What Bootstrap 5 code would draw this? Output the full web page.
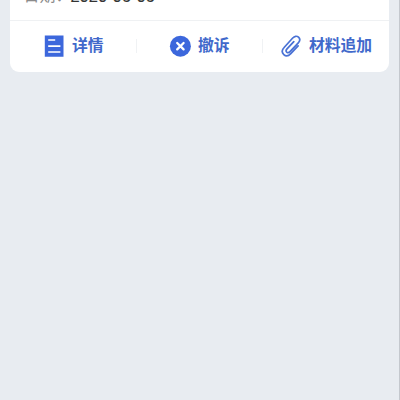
<!DOCTYPE html>
<html lang="zh-CN">
<head>
<meta charset="utf-8">
<meta name="viewport" content="width=device-width, initial-scale=1">
<title>详情</title>
<link href="https://cdn.jsdelivr.net/npm/bootstrap@5.3.0/dist/css/bootstrap.min.css" rel="stylesheet">
<style>
body{height:400px;background:#e8ecf1;border-right:1px solid #c4c8ce;font-family:"Liberation Sans","Noto Sans CJK SC",sans-serif}
.record{margin:0 9.6px 0 10.4px;height:71.5px;border-radius:0 0 9px 9px}
.date-row{height:21px;padding-left:13px;border-bottom:1px solid #eff1f3;font-size:16px;line-height:24px}
.date-row>div{margin-top:-16px}
.date-label{width:47px;color:#8b8b8b}
.date-value{color:#333;font-size:16.5px;-webkit-text-stroke:.2px #333}
.actions{height:50px}
.action{color:#4169cb;font-size:15.8px;font-weight:700;line-height:24px;height:50px}
.action svg{flex:none}
.action span{margin-left:6.5px}
.first{width:125.6px;padding-left:34px}
.second{width:125.4px;padding-left:32.5px}
.third{padding-left:17px}
.divider{width:1px;height:14px;background:#f0f2f4}
</style>
<script src="https://cdn.jsdelivr.net/npm/bootstrap@5.3.0/dist/js/bootstrap.bundle.min.js"></script>
</head>
<body class="overflow-hidden">
<main class="record bg-white overflow-hidden">
  <div class="date-row overflow-hidden"><div class="d-flex"><span class="date-label text-nowrap">日期：</span><span class="date-value">2020-06-06</span></div></div>
  <div class="actions d-flex align-items-center text-nowrap">
    <a class="action first d-flex align-items-center text-decoration-none" href="#">
      <svg width="21" height="22" viewBox="0 0 21 22"><path fill="#3c67dc" d="M.8.6h18.7v21.2H.8z"/><path stroke="#fff" stroke-width="1.7" d="M4.2 5h7M4.2 11.1h12.2M4.2 17h12.2"/></svg><span>详情</span>
    </a>
    <span class="divider"></span>
    <a class="action second d-flex align-items-center text-decoration-none" href="#">
      <svg width="22" height="22" viewBox="0 0 22 22"><circle cx="11.4" cy="11.2" r="10.5" fill="#3c67dc"/><path stroke="#fff" stroke-width="2.3" stroke-linecap="round" d="m8.2 8 6.4 6.4m0-6.4-6.4 6.4"/></svg><span>撤诉</span>
    </a>
    <span class="divider"></span>
    <a class="action third d-flex align-items-center text-decoration-none" href="#">
      <svg width="22" height="22" viewBox="0 0 22 22" fill="none" stroke="#4a72d5" stroke-width="1.7" stroke-linecap="round" stroke-linejoin="round"><path d="m18.1 10.9-7.3 7.8c-2.1 2.2-4.9 2.9-7 .9-2.2-2.1-1.8-4.9.3-7.1l8.6-9.5c1.7-1.9 4.1-2.4 5.8-.8s1.4 3.9-.2 5.6l-8.3 8.8c-1 1.1-2.4 1.3-3.3.5-.9-.9-.7-2.1.3-3.2l6.8-7.3"/></svg><span>材料追加</span>
    </a>
  </div>
</main>
</body>
</html>
